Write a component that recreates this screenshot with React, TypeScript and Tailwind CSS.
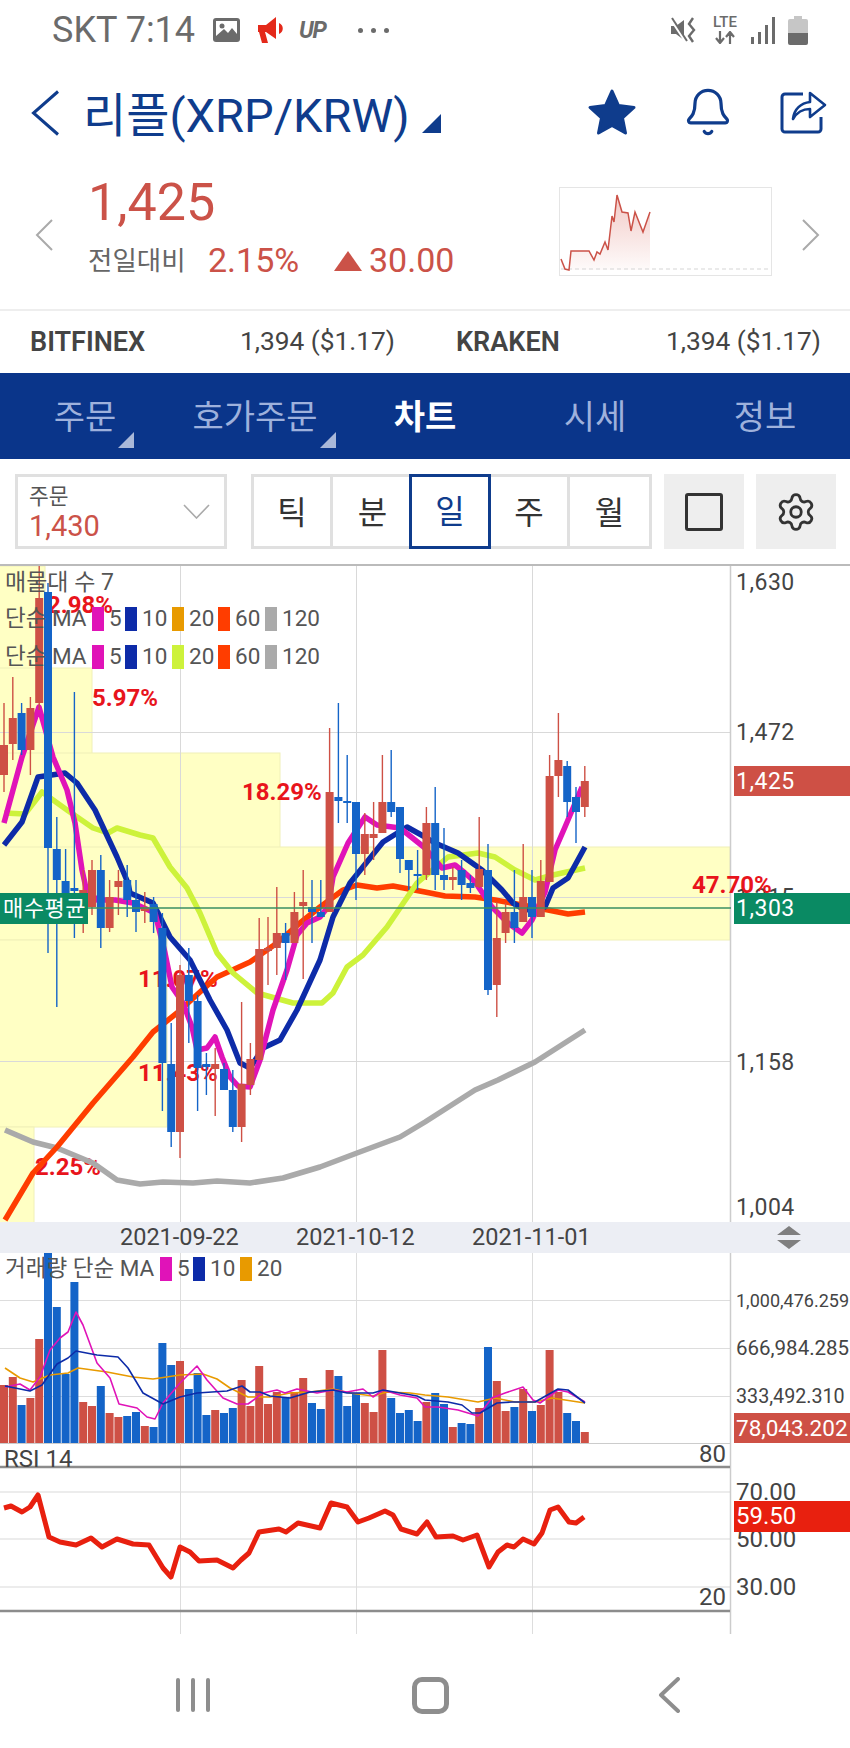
import React from "react";
import { Bell, Settings } from "lucide-react";

const RED = "#ce5045";
const BLUE = "#1464c8";

type Candle = [0 | 1, number, number, number, number];

// up/down flag, wick top, body top, body bottom, wick bottom
const CANDLES: Candle[] = [
  [1, 703, 745, 775, 792], [1, 677, 718, 744, 760], [0, 703, 713, 750, 755], [1, 697, 708, 750, 775],
  [1, 566, 598, 703, 710], [0, 583, 592, 848, 953], [0, 817, 849, 880, 1007], [0, 849, 881, 894, 920],
  [0, 692, 888, 891, 938], [1, 870, 890, 893, 933], [1, 860, 870, 907, 915], [0, 855, 870, 928, 948],
  [1, 880, 897, 928, 932], [1, 870, 881, 887, 915], [0, 865, 880, 900, 917], [0, 880, 900, 912, 932],
  [1, 892, 907, 911, 923], [0, 897, 904, 922, 933], [0, 913, 928, 1063, 1111], [0, 1023, 1064, 1132, 1147],
  [1, 965, 975, 1132, 1158], [0, 948, 975, 1001, 1043], [0, 995, 1001, 1068, 1111], [0, 1053, 1064, 1067, 1095],
  [1, 1048, 1064, 1069, 1116], [0, 1063, 1069, 1090, 1090], [0, 1070, 1090, 1127, 1132], [1, 1002, 1084, 1127, 1142],
  [1, 1043, 1059, 1085, 1095], [1, 918, 949, 1060, 1060], [1, 917, 948, 951, 985], [1, 887, 933, 948, 975],
  [0, 923, 933, 943, 980], [1, 892, 912, 943, 943], [1, 870, 902, 906, 979], [0, 880, 907, 912, 943],
  [0, 880, 912, 917, 917], [1, 728, 792, 912, 912], [0, 703, 797, 801, 823], [0, 755, 801, 803, 823],
  [0, 802, 802, 854, 900], [1, 813, 834, 854, 875], [1, 802, 834, 838, 860], [1, 755, 802, 833, 833],
  [0, 750, 802, 812, 817], [0, 807, 807, 859, 873], [0, 860, 860, 870, 890], [0, 850, 874, 876, 890],
  [1, 807, 823, 875, 880], [0, 787, 823, 875, 890], [0, 828, 875, 880, 890], [1, 867, 877, 880, 890],
  [0, 860, 870, 885, 900], [0, 875, 883, 888, 893], [1, 817, 869, 887, 888], [0, 844, 870, 990, 995],
  [1, 902, 938, 985, 1017], [1, 903, 912, 933, 943], [0, 870, 912, 928, 943], [1, 844, 897, 922, 922],
  [0, 870, 897, 917, 938], [1, 860, 881, 917, 917], [1, 755, 776, 882, 882], [1, 713, 760, 776, 797],
  [0, 761, 766, 802, 817], [0, 787, 797, 812, 843], [1, 766, 781, 807, 817],
];

const MA5 = "4,823 22,757 39,707 53,757 67,790 75,823 82,870 86,888 97,900 115,900 133,903 155,913 165,953 172,987 183,1003 192,1027 197,1050 207,1048 215,1037 222,1057 230,1077 238,1086 250,1087 260,1060 273,1010 287,970 297,935 307,923 320,917 328,907 333,877 348,843 365,817 377,825 400,828 425,848 442,868 455,865 465,873 475,882 492,907 508,923 522,933 532,920 545,892 555,850 565,827 582,787";
const MA10 = "4,845 22,822 38,777 65,773 77,783 95,810 117,857 128,883 130,893 153,903 170,937 190,960 210,1000 227,1030 240,1063 250,1068 263,1048 280,1040 297,1010 320,960 333,917 350,883 383,842 407,827 425,837 435,843 458,853 482,870 502,890 513,903 525,910 545,907 553,888 568,878 585,847";
const MA20 = "4,813 25,814 42,792 67,810 93,828 108,833 117,828 140,835 153,838 170,867 187,888 200,913 217,953 233,973 257,993 293,1003 322,1003 333,993 347,967 363,955 387,927 417,883 448,857 478,853 495,857 515,870 535,880 553,875 585,868";
const MA60 = "5,1220 33,1173 57,1147 93,1103 133,1057 153,1032 177,1013 200,992 217,977 250,962 277,943 300,923 320,907 343,890 357,885 377,888 393,886 425,892 445,896 475,897 495,900 522,905 548,910 568,914 585,912";
const MA120 = "5,1130 33,1142 57,1148 93,1163 117,1180 140,1184 163,1182 193,1183 217,1181 250,1183 283,1178 320,1167 357,1153 400,1137 425,1122 475,1090 498,1080 535,1062 585,1030";

// volume bars: colour flag and top edge
const VOLUMES: [0 | 1, number][] = [
  [1, 1385], [1, 1377], [0, 1405], [1, 1398], [1, 1339], [0, 1253], [0, 1307], [0, 1374], [0, 1282], [1, 1402],
  [1, 1406], [0, 1386], [1, 1413], [1, 1417], [0, 1416], [0, 1412], [1, 1426], [0, 1427], [0, 1343], [0, 1365],
  [1, 1361], [0, 1389], [0, 1373], [0, 1415], [1, 1410], [0, 1413], [0, 1408], [1, 1380], [1, 1406], [1, 1366],
  [1, 1404], [1, 1392], [0, 1397], [1, 1392], [1, 1378], [0, 1403], [0, 1409], [1, 1370], [0, 1376], [0, 1406],
  [0, 1393], [1, 1403], [1, 1412], [1, 1350], [0, 1398], [0, 1413], [0, 1410], [0, 1421], [1, 1402], [0, 1393],
  [0, 1404], [1, 1427], [0, 1423], [0, 1424], [1, 1408], [0, 1347], [1, 1381], [1, 1411], [0, 1407], [1, 1389],
  [0, 1411], [1, 1405], [1, 1350], [1, 1392], [0, 1413], [0, 1421], [1, 1432],
];

const VOL5 = "5,1387 20,1384 30,1390 40,1377 50,1350 60,1338 68,1332 76,1312 83,1325 97,1363 110,1378 119,1404 137,1408 147,1417 155,1419 163,1403 180,1383 197,1366 207,1380 223,1398 237,1404 248,1404 263,1393 277,1390 285,1393 297,1389 317,1393 333,1390 347,1392 363,1389 373,1397 383,1390 400,1395 417,1398 425,1407 438,1407 458,1410 478,1416 492,1398 505,1393 523,1387 533,1400 540,1403 558,1390 568,1392 585,1402";
const VOL10 = "5,1386 30,1391 42,1385 57,1364 68,1358 76,1351 97,1355 118,1357 128,1368 143,1393 163,1404 180,1397 197,1393 227,1391 242,1386 250,1392 260,1392 270,1396 290,1398 310,1392 333,1390 347,1393 363,1393 373,1393 383,1390 400,1393 417,1396 425,1400 448,1402 462,1405 472,1413 480,1413 497,1403 512,1402 535,1402 558,1389 568,1390 585,1403";
const VOL20 = "5,1368 20,1378 33,1382 50,1375 68,1373 78,1368 107,1372 133,1377 153,1379 180,1375 203,1374 217,1379 230,1388 248,1397 270,1397 290,1393 310,1392 333,1389 350,1393 373,1396 387,1392 410,1393 425,1395 448,1397 478,1402 495,1398 515,1402 535,1402 552,1398 585,1403";

const RSI = "4,1508 11,1506 22,1512 30,1507 38,1495 49,1537 60,1542 76,1545 91,1538 102,1547 117,1539 133,1544 149,1545 163,1568 171,1577 180,1547 190,1552 199,1561 217,1560 233,1568 241,1560 249,1553 259,1532 279,1529 286,1532 298,1523 320,1528 331,1503 347,1507 358,1522 369,1518 385,1511 393,1515 401,1529 417,1534 427,1522 436,1537 453,1536 463,1540 477,1535 489,1567 498,1552 507,1545 514,1547 523,1539 534,1544 542,1533 550,1510 558,1507 569,1522 576,1523 584,1517";

const SPARK = "560,260 564,270 568,271 570,252 588,252 593,261 596,253 599,255 604,243 607,251 611,217 613,223 616,196 621,213 627,214 630,232 634,213 642,233 649,213";

function MaLine({ points, color }: { points: string; color: string }) {
  return <polyline points={points} fill="none" stroke={color} strokeWidth={5.5} strokeLinejoin="round" />;
}

function ThinLine({ points, color }: { points: string; color: string }) {
  return <polyline points={points} fill="none" stroke={color} strokeWidth={1.6} strokeLinejoin="round" />;
}

function Swatch({ className }: { className: string }) {
  return <span className={`w-[12px] h-[24px] shrink-0 ${className}`} />;
}

function MaLegend({ twenty }: { twenty: string }) {
  return (
    <div className="flex items-center h-[24px] text-[22.5px] text-[#555555]">
      <span className="w-[87px] whitespace-nowrap">단순 MA</span>
      <Swatch className="bg-[#e013b8]" />
      <span className="w-[21px] pl-[5px]">5</span>
      <Swatch className="bg-[#0d2ba8]" />
      <span className="w-[35px] pl-[5px]">10</span>
      <Swatch className={twenty} />
      <span className="w-[34px] pl-[5px]">20</span>
      <Swatch className="bg-[#ff3d00]" />
      <span className="w-[35px] pl-[5px]">60</span>
      <Swatch className="bg-[#aaaaaa]" />
      <span className="pl-[5px]">120</span>
    </div>
  );
}

function StatusBar() {
  return (
    <div className="h-[60px] flex items-center pl-[52px] pr-[42px] text-[#6b6b6b]">
      <span className="text-[36px] leading-none w-[160px] whitespace-nowrap">SKT 7:14</span>
      <svg width="29" height="26" viewBox="0 0 29 26" className="shrink-0">
        <rect x="1" y="1" width="27" height="24" rx="3" fill="#6b6b6b" />
        <rect x="4" y="4" width="21" height="15" fill="#ffffff" />
        <circle cx="10" cy="9" r="2.5" fill="#6b6b6b" />
        <path d="M4 19 L12 12 L16 16 L20 11 L25 17 V22 H4 Z" fill="#6b6b6b" />
      </svg>
      <svg width="30" height="28" viewBox="0 0 30 28" className="ml-[15px] shrink-0">
        <path d="M2 9 H10 L20 1 V23 L10 16 H9 L12 27 H6 L3 16 H2 Z" fill="#e4291a" />
        <path d="M23 7 C28 9 28 16 23 18 Z" fill="#e4291a" />
      </svg>
      <span className="ml-[13px] text-[23px] leading-none font-bold italic tracking-tighter w-[33px]">UP</span>
      <span className="ml-[26px] flex gap-[8px]">
        <span className="w-[5px] h-[5px] rounded-full bg-[#6b6b6b]" />
        <span className="w-[5px] h-[5px] rounded-full bg-[#6b6b6b]" />
        <span className="w-[5px] h-[5px] rounded-full bg-[#6b6b6b]" />
      </span>
      <div className="ml-auto flex items-center">
        <svg width="28" height="28" viewBox="0 0 28 28">
          <path d="M1 10 H6 L14 4 V24 L6 18 H1 Z" fill="#6b6b6b" />
          <path d="M1 3 L16 26" stroke="#ffffff" strokeWidth="3" />
          <path d="M2 2 L17 25" stroke="#6b6b6b" strokeWidth="2" />
          <path d="M23 2 L19 8 L24 14 L19 20 L23 26" fill="none" stroke="#6b6b6b" strokeWidth="2.4" />
        </svg>
        <div className="ml-[13px] w-[28px] flex flex-col items-center">
          <span className="text-[15px] leading-[12px] font-medium">LTE</span>
          <svg width="26" height="13" viewBox="0 0 26 13" className="mt-[3px]">
            <path d="M8 0 V11 M4 7 L8 12 L12 7 M18 13 V2 M14 6 L18 1 L22 6" fill="none" stroke="#6b6b6b" strokeWidth="2.2" />
          </svg>
        </div>
        <svg width="25" height="27" viewBox="0 0 25 27" className="ml-[12px]">
          <rect x="0" y="20" width="3" height="7" fill="#6b6b6b" />
          <rect x="7" y="15" width="3" height="12" fill="#6b6b6b" />
          <rect x="14" y="8" width="3" height="19" fill="#6b6b6b" />
          <rect x="21" y="0" width="3" height="27" fill="#6b6b6b" />
        </svg>
        <svg width="20" height="29" viewBox="0 0 20 29" className="ml-[12px]">
          <rect x="6" y="0" width="8" height="4" fill="#c6c6c6" />
          <path d="M2 3 H18 A2 2 0 0 1 20 5 V17 H0 V5 A2 2 0 0 1 2 3 Z" fill="#c6c6c6" />
          <path d="M0 17 H20 V27 A2 2 0 0 1 18 29 H2 A2 2 0 0 1 0 27 Z" fill="#6b6b6b" />
        </svg>
      </div>
    </div>
  );
}

function Header() {
  return (
    <div className="h-[110px] flex items-center pl-[31px] pr-[23px] text-[#0f3c8c]">
      <svg width="29" height="46" viewBox="0 0 29 46" className="shrink-0 mb-[4px]">
        <path d="M27 1.5 L2.5 23 L27 44.5" fill="none" stroke="#0f3c8c" strokeWidth="3" />
      </svg>
      <span className="ml-[23px] text-[47px] leading-none whitespace-nowrap w-[324px]">리플(XRP/KRW)</span>
      <svg width="19" height="19" viewBox="0 0 19 19" className="ml-[15px] mt-[16px] shrink-0">
        <path d="M19 0 V19 H0 Z" fill="#0f3c8c" />
      </svg>
      <div className="ml-auto flex items-center mb-[6px]">
        <svg width="50" height="48" viewBox="0 0 50 48">
          <path
            d="M25 3 L31.5 17.5 L47 19.5 L35.5 30 L38.5 45 L25 37.5 L11.5 45 L14.5 30 L3 19.5 L18.5 17.5 Z"
            fill="#0f3c8c"
            stroke="#0f3c8c"
            strokeWidth="3"
            strokeLinejoin="round"
          />
        </svg>
        <Bell size={52} strokeWidth={1.5} className="ml-[45px] text-[#0f3c8c]" />
        <svg width="47" height="44" viewBox="0 0 47 44" className="ml-[46px]">
          <path d="M23 4 H5 A3 3 0 0 0 2 7 V39 A3 3 0 0 0 5 42 H38 A3 3 0 0 0 41 39 V27" fill="none" stroke="#0f3c8c" strokeWidth="3" />
          <path d="M13 29 C14 19 21 13 30 12 V3 L45 15 L30 27 V19 C23 19 17 22 13 29 Z" fill="#ffffff" stroke="#0f3c8c" strokeWidth="2.6" strokeLinejoin="round" />
        </svg>
      </div>
    </div>
  );
}

function Quote() {
  return (
    <div className="h-[139px] flex items-center pl-[35px] pr-[30px]">
      <svg width="18" height="32" viewBox="0 0 18 32" className="mb-[10px] shrink-0">
        <path d="M17 1 L2 16 L17 31" fill="none" stroke="#aaaaaa" strokeWidth="2" />
      </svg>
      <div className="ml-[35px] flex flex-col text-[#cb5248] pb-[30px]">
        <span className="text-[52px] leading-[58px]">1,425</span>
        <div className="flex items-center mt-[14px] h-[30px]">
          <span className="text-[26.5px] text-[#666666] w-[120px] whitespace-nowrap">전일대비</span>
          <span className="text-[34px] w-[126px]">2.15%</span>
          <svg width="28" height="20" viewBox="0 0 28 20" className="shrink-0">
            <path d="M14 0 L28 20 H0 Z" fill="#cb5248" />
          </svg>
          <span className="ml-[7px] text-[34px]">30.00</span>
        </div>
      </div>
      <svg width="213" height="89" viewBox="558 188 213 89" className="ml-auto mb-[16px] shrink-0">
        <defs>
          <linearGradient id="sparkFill" x1="0" y1="0" x2="0" y2="1">
            <stop offset="0" stopColor="#e9a6a0" stopOpacity="0.6" />
            <stop offset="1" stopColor="#e9a6a0" stopOpacity="0.05" />
          </linearGradient>
        </defs>
        <rect x="558.5" y="188.5" width="212" height="88" fill="#ffffff" stroke="#e5e5e5" />
        <polygon points={`560,271 ${SPARK} 649,271`} fill="url(#sparkFill)" />
        <line x1="560" y1="270" x2="769" y2="270" stroke="#d5d5d5" strokeDasharray="4 3" />
        <polyline points={SPARK} fill="none" stroke="#cb5248" strokeWidth="1.5" />
      </svg>
      <svg width="18" height="32" viewBox="0 0 18 32" className="ml-[30px] mb-[10px] shrink-0">
        <path d="M1 1 L16 16 L1 31" fill="none" stroke="#aaaaaa" strokeWidth="2" />
      </svg>
    </div>
  );
}

function Exchanges() {
  return (
    <div className="h-[64px] border-t-2 border-[#eeeeee] flex items-center pl-[30px] text-[26.3px] text-[#444444]">
      <span className="font-semibold text-[27px] w-[210px]">BITFINEX</span>
      <span className="w-[216px]">1,394 ($1.17)</span>
      <span className="font-semibold text-[27px] w-[210px]">KRAKEN</span>
      <span>1,394 ($1.17)</span>
    </div>
  );
}

function Nav() {
  const tabs = [
    { label: "주문", arrow: true },
    { label: "호가주문", arrow: true },
    { label: "차트", active: true },
    { label: "시세" },
    { label: "정보" },
  ];
  return (
    <div className="h-[86px] bg-[#0a358a] grid grid-cols-5 text-[34px] text-[#9eb1dc]">
      {tabs.map((t) => (
        <div key={t.label} className="flex items-center justify-center pt-[2px]">
          <span className={`relative leading-none ${t.active ? "text-white font-bold" : ""}`}>
            {t.label}
            {t.arrow && (
              <svg width="16" height="16" viewBox="0 0 16 16" className="absolute left-full top-[32px] ml-[2px]">
                <path d="M16 0 V16 H0 Z" fill="#a9b8d9" />
              </svg>
            )}
          </span>
        </div>
      ))}
    </div>
  );
}

function Controls() {
  return (
    <div className="h-[105px] flex items-start pt-[15px] pl-[15px]">
      <div className="w-[212px] h-[75px] border-[3px] border-[#e0e0e0] flex items-center pl-[11px] pr-[14px]">
        <div className="flex flex-col pt-[2px]">
          <span className="text-[21.5px] leading-[26px] text-[#555555]">주문</span>
          <span className="text-[29px] leading-[32px] text-[#cb5248]">1,430</span>
        </div>
        <svg width="27" height="15" viewBox="0 0 27 15" className="ml-auto">
          <path d="M1 1 L13.5 14 L26 1" fill="none" stroke="#aaaaaa" strokeWidth="1.6" />
        </svg>
      </div>
      <div className="ml-[24px] w-[401px] h-[75px] grid grid-cols-5 border-[3px] border-[#e0e0e0] text-[32px] text-[#333333]">
        <span className="flex items-center justify-center border-r-[3px] border-[#e0e0e0]">틱</span>
        <span className="flex items-center justify-center">분</span>
        <span className="flex items-center justify-center h-[75px] -mt-[3px] -ml-[3px] border-[3px] border-[#0f3c8c] text-[#0f3c8c]">일</span>
        <span className="flex items-center justify-center border-r-[3px] border-[#e0e0e0]">주</span>
        <span className="flex items-center justify-center">월</span>
      </div>
      <div className="ml-[12px] w-[80px] h-[75px] bg-[#eeeeee] flex items-center justify-center">
        <span className="w-[38px] h-[38px] rounded-[3px] border-[3px] border-[#333333]" />
      </div>
      <div className="ml-[12px] w-[80px] h-[75px] bg-[#eeeeee] flex items-center justify-center">
        <Settings size={42} strokeWidth={1.6} className="text-[#333333]" />
      </div>
    </div>
  );
}

function PriceChart() {
  return (
    <div className="relative h-[658px] border-t-2 border-[#bbbbbb]">
      <svg width="850" height="656" viewBox="0 566 850 656" className="block">
        {/* volume profile */}
        <g fill="#ffffc4" stroke="#f0f0b8">
          <rect x="-2" y="566" width="47" height="104" />
          <rect x="-2" y="668" width="94" height="86" />
          <rect x="-2" y="753" width="282" height="95" />
          <rect x="-2" y="847" width="732" height="93" />
          <rect x="-2" y="940" width="169" height="187" />
          <rect x="-2" y="1127" width="36" height="97" />
        </g>
        {/* grid */}
        <g stroke="#d9d9d9" strokeWidth="1">
          <line x1="0" y1="732.5" x2="730" y2="732.5" />
          <line x1="0" y1="897.5" x2="730" y2="897.5" />
          <line x1="0" y1="1061.5" x2="730" y2="1061.5" />
          <line x1="180.5" y1="566" x2="180.5" y2="1222" />
          <line x1="356.5" y1="566" x2="356.5" y2="1222" />
          <line x1="532.5" y1="566" x2="532.5" y2="1222" />
        </g>
        <line x1="730.5" y1="566" x2="730.5" y2="1222" stroke="#cccccc" strokeWidth="1.5" />

        {/* profile percentages */}
        <g fill="#e8141c" fontSize="24" fontWeight="700" dominantBaseline="central">
          <text x="47" y="605">2.98%</text>
          <text x="92" y="698">5.97%</text>
          <text x="242" y="792">18.29%</text>
          <text x="138" y="979">11.07%</text>
          <text x="138" y="1073">11.43%</text>
          <text x="35" y="1167">2.25%</text>
        </g>

        <MaLine points={MA120} color="#aaaaaa" />
        <MaLine points={MA60} color="#ff3d00" />
        <MaLine points={MA20} color="#cdf23b" />
        <MaLine points={MA10} color="#0d2ba8" />
        <MaLine points={MA5} color="#e013b8" />

        {CANDLES.map(([up, wt, bt, bb, wb], i) => {
          const cx = 4 + i * 8.8;
          const c = up ? RED : BLUE;
          return (
            <g key={i}>
              <line x1={cx} y1={wt} x2={cx} y2={wb} stroke={c} strokeWidth="1.4" />
              <rect x={cx - 4} y={bt} width="8" height={Math.max(bb - bt, 2)} fill={c} />
            </g>
          );
        })}

        <line x1="0" y1="908" x2="731" y2="908" stroke="#3a8f63" strokeWidth="1.5" />

        {/* axis */}
        <g fontSize="23" fill="#444444" dominantBaseline="central" letterSpacing="0.5">
          <text x="736" y="582">1,630</text>
          <text x="736" y="732">1,472</text>
          <text x="736" y="897">1,315</text>
          <text x="736" y="1062">1,158</text>
          <text x="736" y="1207">1,004</text>
        </g>
        <rect x="734" y="766" width="116" height="30" fill={RED} />
        <text x="736" y="781" fontSize="23" letterSpacing="0.5" fill="#ffffff" dominantBaseline="central">1,425</text>
        <rect x="734" y="893" width="116" height="31" fill="#0a8a63" />
        <text x="736" y="908" fontSize="23" letterSpacing="0.5" fill="#ffffff" dominantBaseline="central">1,303</text>
        <text x="692" y="885" fill="#e8141c" fontSize="24" fontWeight="700" dominantBaseline="central">47.70%</text>
        <rect x="0" y="893" width="88" height="31" fill="#0a8a63" />
        <text x="3" y="908" fontSize="22" letterSpacing="0.5" fill="#ffffff" dominantBaseline="central">매수평균</text>
      </svg>

      <div className="absolute left-[5px] top-[4px] flex flex-col gap-[14px]">
        <span className="text-[23px] leading-[26px] text-[#555555] -mb-[3px]">매물대 수 7</span>
        <MaLegend twenty="bg-[#e89a00]" />
        <MaLegend twenty="bg-[#cdf23b]" />
      </div>
    </div>
  );
}

function DateBar() {
  return (
    <div className="h-[31px] bg-[#eceef4] flex items-center pl-[120px] pr-[48px] text-[23.5px] text-[#444444]">
      <span className="w-[176px]">2021-09-22</span>
      <span className="w-[176px]">2021-10-12</span>
      <span>2021-11-01</span>
      <svg width="26" height="23" viewBox="0 0 26 23" className="ml-auto">
        <path d="M13 0 L25 9 H1 Z M1 14 H25 L13 23 Z" fill="#7f7f7f" />
      </svg>
    </div>
  );
}

function VolumeChart() {
  return (
    <div className="relative h-[190px]">
      <svg width="850" height="190" viewBox="0 1253 850 190" className="block">
        <g stroke="#dddddd" strokeWidth="1">
          <line x1="0" y1="1300.5" x2="730" y2="1300.5" />
          <line x1="0" y1="1348.5" x2="730" y2="1348.5" />
          <line x1="0" y1="1396.5" x2="730" y2="1396.5" />
          <line x1="180.5" y1="1253" x2="180.5" y2="1443" />
          <line x1="356.5" y1="1253" x2="356.5" y2="1443" />
          <line x1="532.5" y1="1253" x2="532.5" y2="1443" />
        </g>
        <line x1="730.5" y1="1253" x2="730.5" y2="1443" stroke="#cccccc" strokeWidth="1.5" />
        {VOLUMES.map(([up, top], i) => (
          <rect key={i} x={i * 8.8} y={top} width="8" height={1443 - top} fill={up ? RED : BLUE} />
        ))}
        <ThinLine points={VOL20} color="#e89a00" />
        <ThinLine points={VOL5} color="#e013b8" />
        <ThinLine points={VOL10} color="#0d2ba8" />
        <g fill="#444444" dominantBaseline="central">
          <text x="736" y="1300" fontSize="18">1,000,476.259</text>
          <text x="736" y="1348" fontSize="20.5">666,984.285</text>
          <text x="736" y="1396" fontSize="19.7">333,492.310</text>
        </g>
        <rect x="734" y="1413" width="116" height="30" fill={RED} />
        <text x="736" y="1428" fontSize="22.5" fill="#ffffff" dominantBaseline="central">78,043.202</text>
      </svg>
      <div className="absolute left-[5px] top-[4px] flex items-center h-[24px] text-[22.5px] text-[#555555]">
        <span className="w-[155px] whitespace-nowrap">거래량 단순 MA</span>
        <Swatch className="bg-[#e013b8]" />
        <span className="w-[21px] pl-[5px]">5</span>
        <Swatch className="bg-[#0d2ba8]" />
        <span className="w-[35px] pl-[5px]">10</span>
        <Swatch className="bg-[#e89a00]" />
        <span className="pl-[5px]">20</span>
      </div>
    </div>
  );
}

function RsiChart() {
  return (
    <div className="h-[191px]">
      <svg width="850" height="191" viewBox="0 1443 850 191" className="block">
        <line x1="0" y1="1443.5" x2="730" y2="1443.5" stroke="#cccccc" />
        <g stroke="#e6e6e6" strokeWidth="1.5">
          <line x1="0" y1="1492" x2="730" y2="1492" />
          <line x1="0" y1="1539" x2="730" y2="1539" />
          <line x1="0" y1="1587" x2="730" y2="1587" />
        </g>
        <g stroke="#dddddd" strokeWidth="1">
          <line x1="180.5" y1="1443" x2="180.5" y2="1634" />
          <line x1="356.5" y1="1443" x2="356.5" y2="1634" />
          <line x1="532.5" y1="1443" x2="532.5" y2="1634" />
        </g>
        <line x1="730.5" y1="1443" x2="730.5" y2="1634" stroke="#cccccc" strokeWidth="1.5" />
        <line x1="0" y1="1467" x2="730" y2="1467" stroke="#8c8c8c" strokeWidth="2.5" />
        <line x1="0" y1="1611" x2="730" y2="1611" stroke="#8c8c8c" strokeWidth="2.5" />
        <polyline points={RSI} fill="none" stroke="#e8200f" strokeWidth="5" strokeLinejoin="round" />
        <g fontSize="24" fill="#444444" dominantBaseline="central">
          <text x="4" y="1459">RSI 14</text>
          <text x="699" y="1454">80</text>
          <text x="699" y="1597">20</text>
          <text x="736" y="1492">70.00</text>
          <text x="736" y="1539">50.00</text>
          <text x="736" y="1587">30.00</text>
        </g>
        <rect x="734" y="1501" width="116" height="31" fill="#e8200f" />
        <text x="736" y="1516" fontSize="24" fill="#ffffff" dominantBaseline="central">59.50</text>
      </svg>
    </div>
  );
}

function BottomBar() {
  return (
    <div className="h-[114px] flex items-center pt-[8px] pl-[176px]">
      <div className="flex gap-[11px] w-[33px] shrink-0">
        <span className="w-[4px] h-[34px] shrink-0 rounded-full bg-[#8e8e8e]" />
        <span className="w-[4px] h-[34px] shrink-0 rounded-full bg-[#8e8e8e]" />
        <span className="w-[4px] h-[34px] shrink-0 rounded-full bg-[#8e8e8e]" />
      </div>
      <span className="ml-[203px] w-[37px] h-[37px] rounded-[10px] border-[5px] border-[#8e8e8e] shrink-0" />
      <svg width="22" height="36" viewBox="0 0 22 36" className="ml-[209px] shrink-0">
        <path d="M20 2 L3 18 L20 34" fill="none" stroke="#8e8e8e" strokeWidth="4" strokeLinecap="round" strokeLinejoin="round" />
      </svg>
    </div>
  );
}

export default function App() {
  return (
    <div className="w-[850px] h-[1748px] overflow-hidden bg-white [font-family:Roboto,'Noto_Sans_CJK_KR',sans-serif]">
      <StatusBar />
      <Header />
      <Quote />
      <Exchanges />
      <Nav />
      <Controls />
      <PriceChart />
      <DateBar />
      <VolumeChart />
      <RsiChart />
      <BottomBar />
    </div>
  );
}
